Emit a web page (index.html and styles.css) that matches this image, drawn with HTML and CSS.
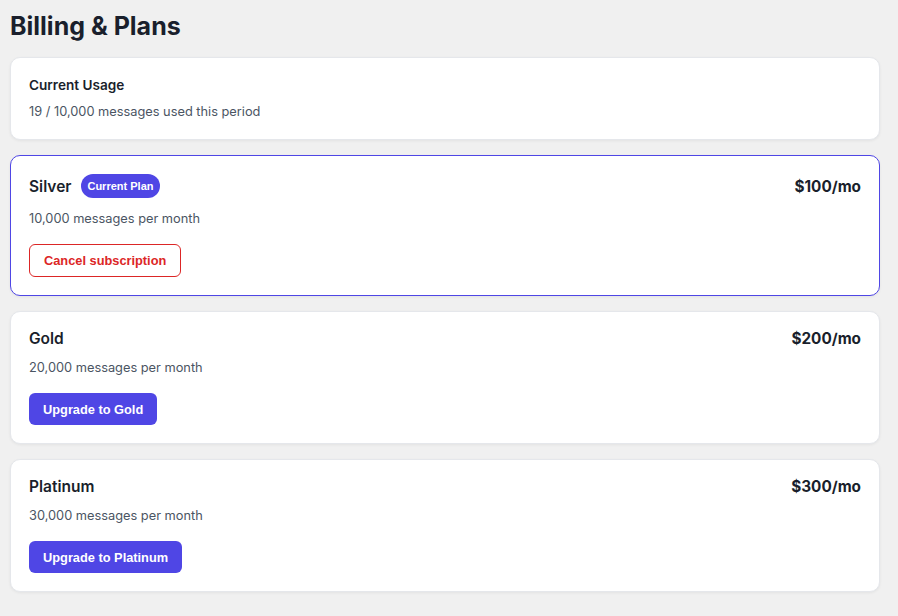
FILE: index.html
```html
<!DOCTYPE html>
<html lang="en">
<head>
  <meta charset="UTF-8">
  <title>Billing &amp; Plans</title>
  <link rel="stylesheet" href="styles.css">
</head>
<body>
  <div class="page">
    <h1>Billing &amp; Plans</h1>

    <div class="card usage">
      <h2>Current Usage</h2>
      <p class="desc">19 / 10,000 messages used this period</p>
    </div>

    <div class="card plan current">
      <div class="plan-head">
        <div class="plan-name">
          <h3>Silver</h3>
          <span class="badge">Current Plan</span>
        </div>
        <div class="price">$100/mo</div>
      </div>
      <p class="desc">10,000 messages per month</p>
      <button class="btn btn-cancel">Cancel subscription</button>
    </div>

    <div class="card plan">
      <div class="plan-head">
        <div class="plan-name">
          <h3>Gold</h3>
        </div>
        <div class="price">$200/mo</div>
      </div>
      <p class="desc">20,000 messages per month</p>
      <button class="btn btn-primary">Upgrade to Gold</button>
    </div>

    <div class="card plan">
      <div class="plan-head">
        <div class="plan-name">
          <h3>Platinum</h3>
        </div>
        <div class="price">$300/mo</div>
      </div>
      <p class="desc">30,000 messages per month</p>
      <button class="btn btn-primary">Upgrade to Platinum</button>
    </div>
  </div>
</body>
</html>
```

FILE: styles.css
```css
body {
  font-family: Inter, "Noto Sans", sans-serif;
  background-color: #f0f0f0;
  color: #1a1f2c;
  margin: 0;
  padding: 0;
}
.page {
  padding: 10px 18px 24px 10px;
}
h1 {
  font-size: 25px;
  font-weight: 700;
  line-height: 32px;
  margin: 0 0 15px;
}
.card {
  background-color: #fff;
  border: 1px solid #e5e7eb;
  border-radius: 10px;
  box-shadow: 0 1px 3px rgba(0, 0, 0, 0.06);
  padding: 18px;
  margin-bottom: 15px;
}
.card.current {
  border-color: #4f46e5;
}
.usage h2 {
  font-size: 13.6px;
  font-weight: 600;
  line-height: 18px;
  margin: 0 0 9px;
}
.desc {
  font-size: 12.8px;
  line-height: 18px;
  color: #4b5563;
  margin: 0;
}
.plan-head {
  display: flex;
  justify-content: space-between;
  align-items: center;
  margin-bottom: 12px;
}
.plan-name {
  display: flex;
  align-items: center;
  gap: 9.5px;
}
.plan-name h3 {
  font-size: 15.5px;
  font-weight: 600;
  line-height: 17px;
  margin: 0;
}
.price {
  font-size: 15.3px;
  font-weight: 700;
  line-height: 17px;
}
.badge {
  font-family: "Liberation Sans", Arial, sans-serif;
  font-size: 11px;
  font-weight: 700;
  color: #fff;
  background-color: #4f46e5;
  border-radius: 12px;
  height: 24px;
  line-height: 24px;
  padding: 0 6.5px;
}
.plan .desc {
  margin-bottom: 16px;
}
.btn {
  display: block;
  font-family: "Liberation Sans", Arial, sans-serif;
  font-size: 12.8px;
  font-weight: 700;
  height: 32px;
  padding: 0 14px;
  border-radius: 6px;
  cursor: pointer;
}
.btn-primary {
  background-color: #4f46e5;
  color: #fff;
  border: none;
}
.btn-cancel {
  background-color: #fff;
  color: #dc2626;
  border: 1px solid #dc2626;
  height: 33px;
}
```
